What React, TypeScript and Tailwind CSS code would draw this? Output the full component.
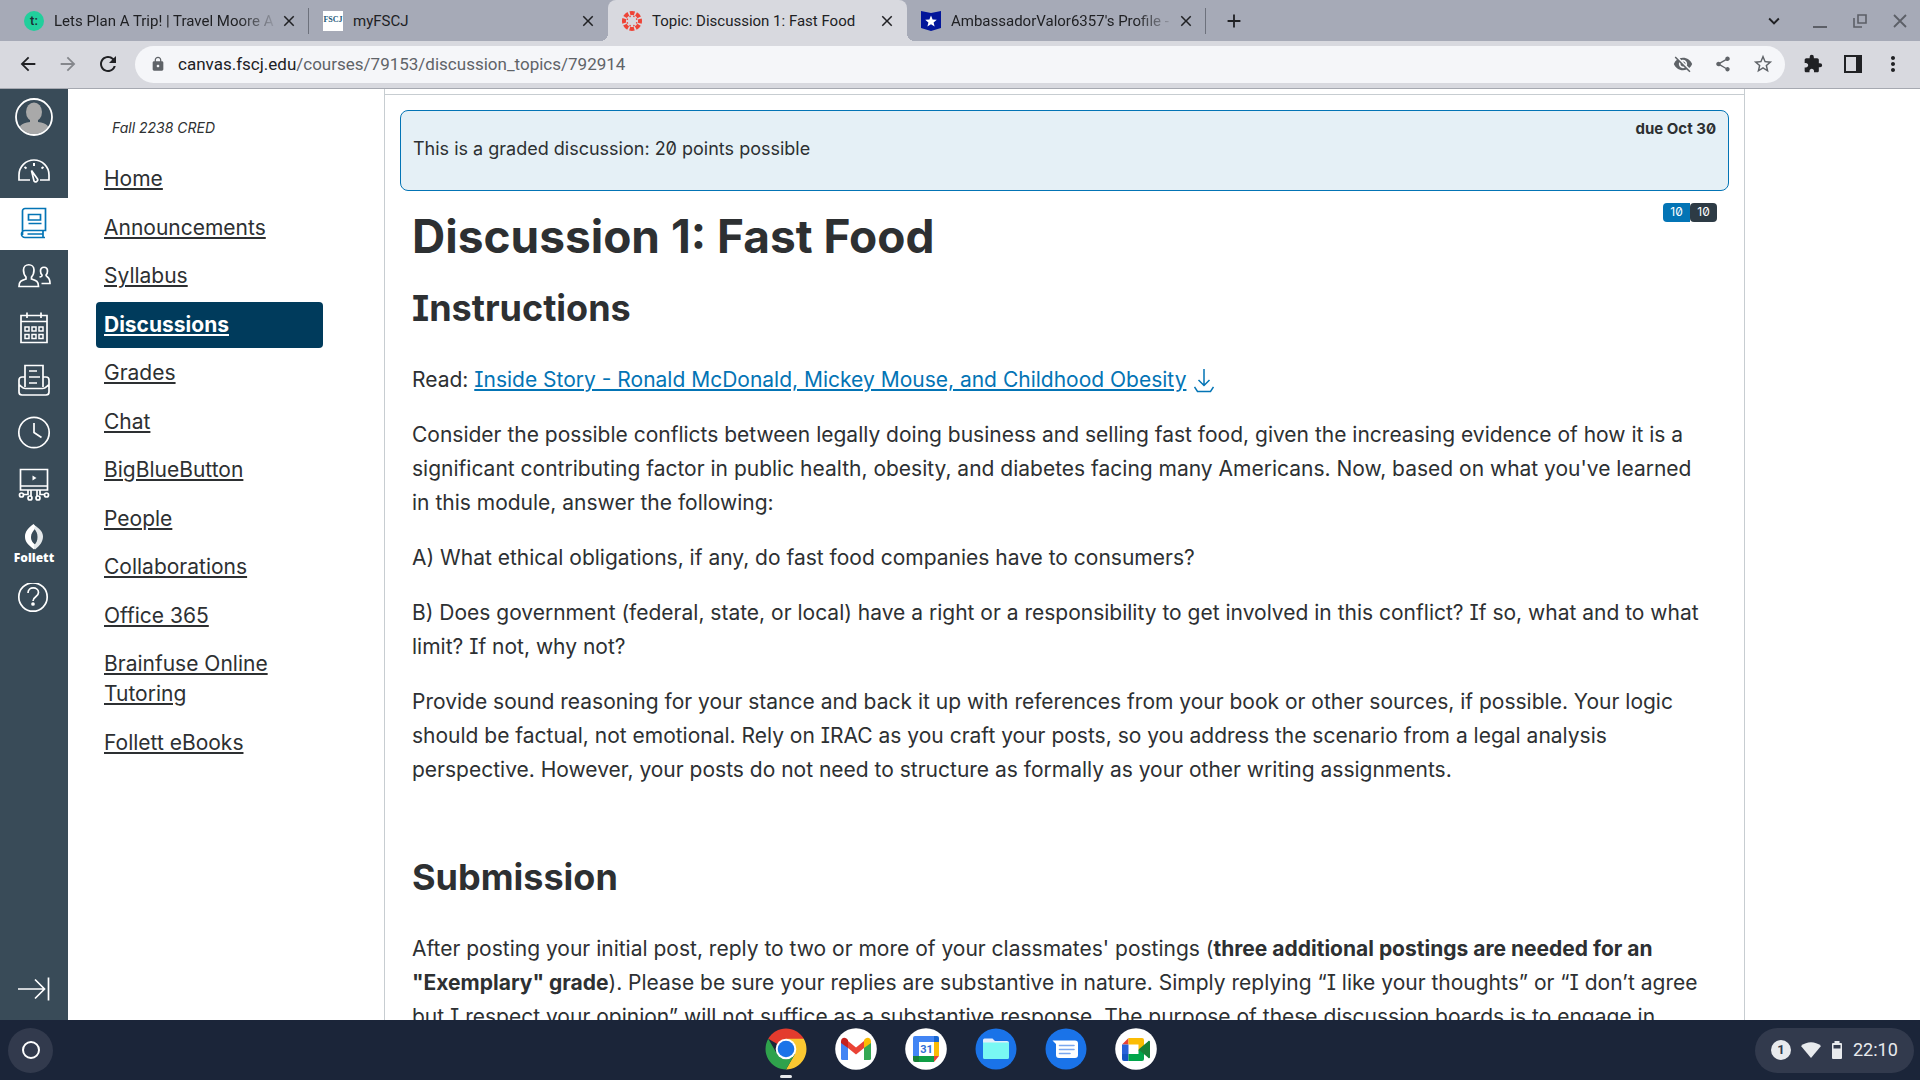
import React from 'react';
import {
  MdArrowBack,
  MdArrowForward,
  MdRefresh,
  MdLock,
  MdVisibilityOff,
  MdShare,
  MdStarBorder,
  MdExtension,
  MdMoreVert,
  MdClose,
  MdAdd,
  MdExpandMore,
} from 'react-icons/md';

interface BrowserTab {
  title: string;
  icon: React.ReactNode;
  active?: boolean;
  divider?: boolean;
}

interface CourseLink {
  label: string;
  active?: boolean;
}

const courseLinks: CourseLink[] = [
  { label: 'Home' },
  { label: 'Announcements' },
  { label: 'Syllabus' },
  { label: 'Discussions', active: true },
  { label: 'Grades' },
  { label: 'Chat' },
  { label: 'BigBlueButton' },
  { label: 'People' },
  { label: 'Collaborations' },
  { label: 'Office 365' },
  { label: 'Brainfuse Online Tutoring' },
  { label: 'Follett eBooks' },
];

/* ---------- favicons ---------- */

function CanvasFavicon() {
  return (
    <svg viewBox="0 0 20 20" className="w-5 h-5 shrink-0">
      <circle cx="10" cy="10" r="8" fill="none" stroke="#ee4437" strokeWidth="4" strokeDasharray="4.6 1.68" strokeDashoffset="2.3" />
      {[0, 45, 90, 135, 180, 225, 270, 315].map(a => (
        <circle key={a} cx="10" cy="5" r="0.8" fill="#ee4437" transform={`rotate(${a + 22} 10 10)`} />
      ))}
    </svg>
  );
}

const tabs: BrowserTab[] = [
  {
    title: 'Lets Plan A Trip! | Travel Moore A',
    icon: <span className="w-5 h-5 shrink-0 rounded-full bg-[#21cf9c] text-[#1c2b33] text-[13px] leading-5 font-medium text-center">t:</span>,
    divider: true,
  },
  {
    title: 'myFSCJ',
    icon: (
      <span className="w-5 h-5 shrink-0 bg-white text-[#1d5a7a] text-[8px] leading-[18px] font-bold text-center font-['Liberation_Serif',serif]">
        FSCJ
      </span>
    ),
  },
  { title: 'Topic: Discussion 1: Fast Food', icon: <CanvasFavicon />, active: true },
  {
    title: "AmbassadorValor6357's Profile -",
    icon: (
      <svg viewBox="0 0 20 20" className="w-5 h-5 shrink-0">
        <path d="M0 0l10 2L20 0v17l-10 3-10-3z" fill="#03169a" />
        <path d="M10 4.5l1.600 3.900 4.200.3-3.200 2.700 1 4.100-3.600-2.200-3.600 2.200 1-4.100-3.200-2.700 4.200-.3z" fill="#fff" />
      </svg>
    ),
    divider: true,
  },
];

function TabStrip() {
  return (
    <div className="h-[41px] bg-[#a6aab7] flex pl-2.5 text-[#202124] font-[Roboto,sans-serif]">
      {tabs.map(tab => (
        <div
          key={tab.title}
          className={`relative w-[299px] h-full flex items-center pl-3.5 pr-2.5 ${tab.active ? 'bg-[#d8d9df] rounded-t-lg' : ''}`}
        >
          {tab.icon}
          <a
            href="#"
            className={`flex-1 ml-2.5 text-[15px] leading-5 whitespace-nowrap ${
              tab.divider ? '[mask-image:linear-gradient(to_right,#000_82%,transparent)]' : ''
            }`}
          >
            {tab.title}
          </a>
          <button aria-label="Close tab" className="w-5 h-5 flex items-center justify-center">
            <MdClose className="w-[18px] h-[18px]" />
          </button>
          {tab.divider && <span className="absolute right-0 top-2 w-px h-[26px] bg-[#6d717c]" />}
          {tab.active && (
            <>
              <span className="absolute bottom-0 -left-2 w-2 h-2 bg-[radial-gradient(circle_at_0_0,transparent_8px,#d8d9df_8px)]" />
              <span className="absolute bottom-0 -right-2 w-2 h-2 bg-[radial-gradient(circle_at_100%_0,transparent_8px,#d8d9df_8px)]" />
            </>
          )}
        </div>
      ))}
      <button aria-label="New tab" className="w-14 flex items-center justify-center">
        <MdAdd className="w-[22px] h-[22px]" />
      </button>
      <div className="ml-auto flex items-center text-[#5c5f67]">
        <button aria-label="Search tabs" className="w-11 flex justify-center mr-1 text-[#202124]">
          <MdExpandMore className="w-[22px] h-[22px]" />
        </button>
        <button aria-label="Minimize" className="w-10 flex justify-center">
          <svg viewBox="0 0 16 16" className="w-4 h-4">
            <path d="M1 14h14" stroke="currentColor" strokeWidth="2" />
          </svg>
        </button>
        <button aria-label="Restore" className="w-10 flex justify-center">
          <svg viewBox="0 0 16 16" className="w-4 h-4" fill="none" stroke="currentColor" strokeWidth="1.6">
            <path d="M6 2h8v8H6zM2 5v9h8" />
          </svg>
        </button>
        <button aria-label="Close window" className="w-10 flex justify-center">
          <svg viewBox="0 0 16 16" className="w-4 h-4" stroke="currentColor" strokeWidth="1.8">
            <path d="M2 2l12 12M14 2L2 14" />
          </svg>
        </button>
      </div>
    </div>
  );
}

function Toolbar() {
  return (
    <div className="h-12 bg-[#d8d9df] border-b border-[#a6a9b1] flex items-center pl-2 pr-[7px] pb-px text-[#202124] font-[Roboto,sans-serif]">
      <button aria-label="Back" className="w-10 flex justify-center"><MdArrowBack className="w-[22px] h-[22px]" /></button>
      <button aria-label="Forward" className="w-10 flex justify-center text-[#85878c]"><MdArrowForward className="w-[22px] h-[22px]" /></button>
      <button aria-label="Reload" className="w-10 flex justify-center"><MdRefresh className="w-6 h-6" /></button>
      <div className="flex-1 h-[37px] ml-[7px] mr-2 pl-[15px] rounded-full bg-[#f5f6f9] flex items-center text-[#5f6368]">
        <MdLock className="w-4 h-4 mr-3" />
        <div className="flex-1 text-[17px] leading-6 whitespace-nowrap">
          <span className="text-[#202124]">canvas.fscj.edu</span>/courses/79153/discussion_topics/792914
        </div>
        <button aria-label="Third-party cookies blocked" className="w-10 flex justify-center"><MdVisibilityOff className="w-5 h-5" /></button>
        <button aria-label="Share" className="w-10 flex justify-center"><MdShare className="w-[18px] h-[18px]" /></button>
        <button aria-label="Bookmark" className="w-10 flex justify-center mr-0.5"><MdStarBorder className="w-[22px] h-[22px]" /></button>
      </div>
      <button aria-label="Extensions" className="w-10 flex justify-center"><MdExtension className="w-5 h-5" /></button>
      <button aria-label="Side panel" className="w-10 flex justify-center">
        <svg viewBox="0 0 18 18" className="w-[18px] h-[18px]">
          <path d="M1 1h16v16H1z" fill="none" stroke="currentColor" strokeWidth="2" />
          <path d="M12 1h5v16h-5z" fill="currentColor" />
        </svg>
      </button>
      <button aria-label="Menu" className="w-10 flex justify-center"><MdMoreVert className="w-6 h-6" /></button>
    </div>
  );
}

/* ---------- global nav ---------- */

function NavIcon({ children }: { children: React.ReactNode }) {
  return (
    <svg viewBox="0 0 34 34" className="w-[34px] h-[34px]" fill="none" stroke="currentColor" strokeWidth="1.7">
      {children}
    </svg>
  );
}

function NavItem({ label, active, children }: { label: string; active?: boolean; children: React.ReactNode }) {
  return (
    <a
      href="#"
      aria-label={label}
      className={`h-[52px] flex items-center justify-center ${active ? 'bg-white text-[#0374b5]' : 'text-white'}`}
    >
      <NavIcon>{children}</NavIcon>
    </a>
  );
}

function GlobalNav() {
  return (
    <nav className="w-[68px] shrink-0 bg-[#394b58] flex flex-col">
      <a href="#" aria-label="Account" className="h-[57px] pb-0.5 flex items-center justify-center">
        <svg viewBox="0 0 38 38" className="w-[38px] h-[38px]">
          <defs>
            <clipPath id="avatar">
              <circle cx="19" cy="19" r="17" />
            </clipPath>
          </defs>
          <g clipPath="url(#avatar)" fill="#a9a9a9">
            <ellipse cx="19" cy="14" rx="8" ry="9.5" />
            <path d="M15 20h8v4c9 1 12 4 12 12H3c0-8 3-11 12-12z" />
          </g>
          <circle cx="19" cy="19" r="18" fill="none" stroke="#fff" strokeWidth="1.8" />
        </svg>
      </a>
      <NavItem label="Dashboard">
        <path d="M13 25H2v-5a15 15 0 0 1 30 0v5h-9" />
        <path d="M14.5 15.5l6 8.5c1 2-2 4-3.5 2z" />
        <path d="M17 8v3M7.5 12l2 1.5M26.5 12l-2 1.5" strokeWidth="2" />
      </NavItem>
      <NavItem label="Courses" active>
        <path d="M8 1.500h20.500v22H8a3.500 3.500 0 0 0 0 7h20M5.500 28V4A2.500 2.500 0 0 1 8 1.500M10.500 27h15.500M26 23.500v7" />
        <path d="M11.500 7.500h12v5.500h-12zM11.500 16.500h13" />
      </NavItem>
      <NavItem label="Groups">
        <path d="M2 27.500c0-5 2-6 7-7.500v-2c-2-2-2.500-4-2.500-7 0-7 10.500-7 10.500 0 0 3-.5 5-2.500 7v2c5 1.500 7 2.500 7 7.500z" />
        <path d="M22.500 18c3-.5 2.500-1 2.500-2-1.500-1.500-1.500-2.500-1.500-4 0-5 7-5 7 0 0 1.500 0 2.500-1.500 4 0 2.500 4 1 4 8.500h-8.500" />
      </NavItem>
      <NavItem label="Calendar">
        <path d="M4 4.500h26v27H4zM4 10.500h26M10 1.500V7M24 1.500V7" />
        <path d="M8 16h4v4H8zM15 16h4v4h-4zM22 16h4v4h-4zM8 23.500h4v4H8zM15 23.500h4v4h-4zM22 23.500h4v4h-4z" strokeWidth="1.5" />
      </NavItem>
      <NavItem label="Inbox">
        <path d="M8 24V2.500h18V24M8 14H5a3 3 0 0 0-3 3v12a3 3 0 0 0 3 3h24a3 3 0 0 0 3-3V17a3 3 0 0 0-3-3h-3M2.500 22c1.500 1 3 3.500 6 3.500h17c3 0 4.500-2.500 6-3.500" />
        <path d="M12 8h8M12 14h11M12 20h8" />
      </NavItem>
      <NavItem label="History">
        <circle cx="17" cy="17.5" r="15.2" />
        <path d="M17 8v9.500l7.500 5" />
      </NavItem>
      <NavItem label="Studio">
        <path d="M3.500 2.500h27V23h-27zM3.500 19h27" />
        <path d="M15.500 8.500v5l4-2.500z" fill="currentColor" stroke="none" />
        <path d="M11 23v4.500H7M14 23v6M20 23v6M23 23v4.500h4" />
        <circle cx="4.500" cy="28" r="2" />
        <circle cx="13" cy="31" r="2" />
        <circle cx="21" cy="31" r="2" />
        <circle cx="29.500" cy="28" r="2" />
      </NavItem>
      <a href="#" className="h-16 pt-3.5 flex flex-col items-center text-white font-['Open_Sans',sans-serif]">
        <svg viewBox="0 0 20 26" className="w-5 h-[26px]">
          <path d="M9.500 0C4 4 1 8 1 12.500c0 4.500 2 7.500 9 13l3-3.500c-4.500-3-6-5.500-6-9C7 9.500 9 7 12.500 3z" fill="#fff" />
          <path d="M11.500 2C16.500 5.500 19 8.500 19 12.500c0 5-3 9-8 13L9.500 22c3-3 4-5.500 4-9C13.500 9.500 12.500 7 10 4.500z" fill="#e4e8ea" />
        </svg>
        <span className="text-[12px] leading-4 font-extrabold">Follett</span>
      </a>
      <NavItem label="Help">
        <circle cx="16" cy="14" r="14.2" />
        <path d="M11 10c0-7 10.500-6.500 10.500-.5 0 4.500-5.500 4-5.500 8.500" />
        <circle cx="16" cy="21" r="1" fill="currentColor" />
      </NavItem>
      <button aria-label="Minimize global navigation" className="mt-auto h-[62px] flex items-center justify-center text-white">
        <NavIcon>
          <path d="M1 17h26M18 7.500l9.500 9.500-9.500 9.500M31.500 5.500v23" />
        </NavIcon>
      </button>
    </nav>
  );
}

function CourseNav() {
  return (
    <aside className="w-[316px] shrink-0 pl-7 pt-[27px]">
      <p className="pl-4 text-[14px] leading-6 italic">Fall 2238 CRED</p>
      <nav className="w-[227px] h-[610px] mt-4 flex flex-col justify-between text-[21px] leading-[30px]">
        {courseLinks.map(link => (
          <a
            key={link.label}
            href="#"
            className={`py-2 px-2 rounded underline underline-offset-2 decoration-2 ${
              link.active ? 'bg-[#003b5c] text-white font-bold' : ''
            }`}
          >
            {link.label}
          </a>
        ))}
      </nav>
    </aside>
  );
}

/* ---------- discussion ---------- */

function Discussion() {
  return (
    <main className="w-[1361px] border-x border-[#c7cdd1]">
      <div className="h-[5px]" />
      <div className="border-t border-[#c7cdd1] px-[15px] pt-[15px]">
        <div className="h-[81px] px-3 pt-2 rounded-lg border border-[#0374b5] bg-[#e5f0f6]">
          <p className="text-right text-[15px] leading-5 font-bold">due Oct 30</p>
          <p className="text-[18px] leading-5">This is a graded discussion: 20 points possible</p>
        </div>
      </div>
      <div className="flex items-start justify-between px-[27px] pt-3">
        <h1 className="text-[46px] leading-[54px] pt-1.5 font-bold">Discussion 1: Fast Food</h1>
        <div className="flex text-[12px] leading-[18px] text-white">
          <span className="w-[27px] h-[19px] rounded-l bg-[#0374b5] text-center">10</span>
          <span className="w-[27px] h-[19px] rounded bg-[#2d3b45] text-center">10</span>
        </div>
      </div>
      <article className="pl-[27px] pr-5 text-[21px] leading-[34px]">
        <h2 className="text-[36px] leading-[42px] mt-6 mb-[34px] font-bold">Instructions</h2>
        <p className="mb-[21px]">
          Read:{' '}
          <a href="#" className="text-[#0374b5] underline underline-offset-2 decoration-2">
            Inside Story - Ronald McDonald, Mickey Mouse, and Childhood Obesity
          </a>
          <button aria-label="Download" className="ml-2 align-middle text-[#0374b5]">
            <svg viewBox="0 0 20 24" className="w-5 h-6" fill="none" stroke="currentColor" strokeWidth="1.5">
              <path d="M10 0v16M4.500 11l5.500 5.500 5.500-5.500M.5 18l3 4.500h13l3-4.500" />
            </svg>
          </button>
        </p>
        <p className="mb-[21px]">
          Consider the possible conflicts between legally doing business and selling fast food, given the increasing evidence of how it is a
          <br />
          significant contributing factor in public health, obesity, and diabetes facing many Americans. Now, based on what you've learned
          <br />
          in this module, answer the following:
        </p>
        <p className="mb-[21px]">A) What ethical obligations, if any, do fast food companies have to consumers?</p>
        <p className="mb-[21px]">
          B) Does government (federal, state, or local) have a right or a responsibility to get involved in this conflict? If so, what and to what
          <br />
          limit? If not, why not?
        </p>
        <p>
          Provide sound reasoning for your stance and back it up with references from your book or other sources, if possible. Your logic
          <br />
          should be factual, not emotional. Rely on IRAC as you craft your posts, so you address the scenario from a legal analysis
          <br />
          perspective. However, your posts do not need to structure as formally as your other writing assignments.
        </p>
        <h2 className="text-[36px] leading-[42px] mt-[69px] mb-[34px] font-bold">Submission</h2>
        <p>
          After posting your initial post, reply to two or more of your classmates' postings (
          <strong>
            three additional postings are needed for an
            <br />
            "Exemplary" grade
          </strong>
          ). Please be sure your replies are substantive in nature. Simply replying “I like your thoughts” or “I don’t agree
          <br />
          but I respect your opinion” will not suffice as a substantive response. The purpose of these discussion boards is to engage in
        </p>
      </article>
    </main>
  );
}

/* ---------- shelf ---------- */

function ChromeIcon() {
  return (
    <svg viewBox="0 0 42 42" className="w-[42px] h-[42px]">
      <path d="M21 21L3.250 10.750A20.500 20.500 0 0 1 38.750 10.750z" fill="#e33b2e" />
      <path d="M21 10.750h17.750A20.500 20.500 0 0 1 21 41.500L29.900 26z" fill="#fbc831" />
      <path d="M3.250 10.750L12.100 26.100 21 31.250l8.900-5.150L21 41.500A20.500 20.500 0 0 1 3.250 10.750z" fill="#2fa24c" />
      <circle cx="21" cy="21" r="10.3" fill="#fff" />
      <circle cx="21" cy="21" r="8.3" fill="#1a73e8" />
    </svg>
  );
}

function GmailIcon() {
  return (
    <svg viewBox="0 0 42 42" className="w-[42px] h-[42px]">
      <circle cx="21" cy="21" r="20.800" fill="#fff" />
      <path d="M6 14v16.500A1.500 1.500 0 0 0 7.500 32H13V19z" fill="#4285f4" />
      <path d="M36 14v16.500a1.500 1.500 0 0 1-1.500 1.500H29V19z" fill="#34a853" />
      <path d="M13 13l8 6.500 8-6.500v7l-8 6.500-8-6.500z" fill="#ea4335" />
      <path d="M6 13.500c0-4 3.500-4.500 5.500-3L13 12v8l-7-5z" fill="#c5221f" />
      <path d="M36 13.500c0-4-3.500-4.500-5.500-3L29 12v8l7-5z" fill="#fbbc04" />
    </svg>
  );
}

function CalendarIcon() {
  return (
    <svg viewBox="0 0 42 42" className="w-[42px] h-[42px]">
      <circle cx="21" cy="21" r="20.800" fill="#fff" />
      <path d="M10 8h19v6H14v15H8V10a2 2 0 0 1 2-2z" fill="#4285f4" />
      <path d="M29 8h3a2 2 0 0 1 2 2v4h-5z" fill="#1967d2" />
      <path d="M29 14h5v14h-5z" fill="#fbbc04" />
      <path d="M14 28h15v6H14z" fill="#0f9d45" />
      <path d="M8 28h6v6h-4a2 2 0 0 1-2-2z" fill="#188038" />
      <path d="M29 28h5l-5 6z" fill="#ea4335" />
      <text x="21.500" y="25" textAnchor="middle" fontSize="11" fontWeight="700" fill="#2f6fd6" className="font-[Roboto,sans-serif]">31</text>
    </svg>
  );
}

function FilesIcon() {
  return (
    <svg viewBox="0 0 42 42" className="w-[42px] h-[42px]">
      <circle cx="21" cy="21" r="20.500" fill="#1a73e8" />
      <path d="M8 12a1.500 1.500 0 0 1 1.500-1.500h8L20 13h12a2 2 0 0 1 2 2v4H8z" fill="#e3ecfb" />
      <path d="M8 14.500h26v15a1.500 1.500 0 0 1-1.500 1.500h-23A1.500 1.500 0 0 1 8 29.500z" fill="#79f8f3" />
    </svg>
  );
}

function MessagesIcon() {
  return (
    <svg viewBox="0 0 42 42" className="w-[42px] h-[42px]">
      <circle cx="21" cy="21" r="20.500" fill="#1a73e8" />
      <path d="M7.500 12.500H30a3 3 0 0 1 3 3V27a3 3 0 0 1-3 3H14a3 3 0 0 1-3-3V16z" fill="#fff" />
      <path d="M14.500 17.500H29M14.500 21.500H29M14.500 25.500H25" stroke="#7aa7ef" strokeWidth="1.6" strokeLinecap="round" />
    </svg>
  );
}

function MeetIcon() {
  return (
    <svg viewBox="0 0 42 42" className="w-[42px] h-[42px]">
      <circle cx="21" cy="21" r="20.800" fill="#fff" />
      <path d="M13.500 10v6.500H7z" fill="#ea4335" />
      <path d="M7 16.500h6.500V26H7z" fill="#2962d9" />
      <path d="M7 26h6.500v7H9a2 2 0 0 1-2-2z" fill="#1555c4" />
      <path d="M13.500 10H27a2 2 0 0 1 2 2v9l-5.500 2v-6.500h-10z" fill="#fbbc04" />
      <path d="M13.500 26h10v-4l5.500-1v10a2 2 0 0 1-2 2H13.500z" fill="#00a54a" />
      <path d="M23.500 21.500L33 13.500a1 1 0 0 1 2 .5v15a1 1 0 0 1-2 .5z" fill="#188038" />
    </svg>
  );
}

const apps = [
  { name: 'Chrome', icon: <ChromeIcon />, running: true },
  { name: 'Gmail', icon: <GmailIcon /> },
  { name: 'Calendar', icon: <CalendarIcon /> },
  { name: 'Files', icon: <FilesIcon /> },
  { name: 'Messages', icon: <MessagesIcon /> },
  { name: 'Meet', icon: <MeetIcon /> },
];

function Shelf() {
  return (
    <footer className="h-[60px] shrink-0 bg-[#1b2539] flex items-center justify-between pl-2 pr-1.5 font-[Roboto,sans-serif]">
      <div className="flex-1">
        <button aria-label="Launcher" className="w-[45px] h-[45px] rounded-full bg-[#323a4d] flex items-center justify-center">
          <span className="w-[18px] h-[18px] rounded-full border-2 border-white" />
        </button>
      </div>
      <div className="flex gap-7">
        {apps.map(app => (
          <button key={app.name} aria-label={app.name} className="relative pb-0.5">
            {app.icon}
            {app.running && <span className="absolute left-[15px] -bottom-1.5 w-3 h-[3px] rounded-full bg-[#e8eaed]" />}
          </button>
        ))}
      </div>
      <div className="flex-1 flex justify-end">
        <button className="h-[45px] w-[159px] pl-4 rounded-full bg-[#323a4d] flex items-center text-[#e8eaed]">
          <span className="w-5 h-5 rounded-full bg-[#e8eaed] text-[#323a4d] text-[13px] leading-5 font-bold">1</span>
          <svg viewBox="0 0 20 16" className="w-5 h-4 ml-2.5">
            <path d="M0 4C6-1 14-1 20 4L10 16z" fill="currentColor" />
          </svg>
          <svg viewBox="0 0 12 18" className="w-3 h-[18px] ml-2.5">
            <path d="M3.500 0h5v2H10a1 1 0 0 1 1 1v14a1 1 0 0 1-1 1H2a1 1 0 0 1-1-1V3a1 1 0 0 1 1-1h1.500z" fill="currentColor" />
            <path d="M2.500 4h7v3.500h-7z" fill="#323a4d" />
          </svg>
          <span className="ml-2.5 text-[18px] leading-6">22:10</span>
        </button>
      </div>
    </footer>
  );
}

export default function App() {
  return (
    <div className="h-screen flex flex-col overflow-hidden bg-white text-[#2d3032]">
      <header className="shrink-0">
        <TabStrip />
        <Toolbar />
      </header>
      <div className="flex-1 min-h-0 flex overflow-hidden font-[Inter,sans-serif] [font-feature-settings:'zero','cv08']">
        <GlobalNav />
        <CourseNav />
        <Discussion />
      </div>
      <Shelf />
    </div>
  );
}
